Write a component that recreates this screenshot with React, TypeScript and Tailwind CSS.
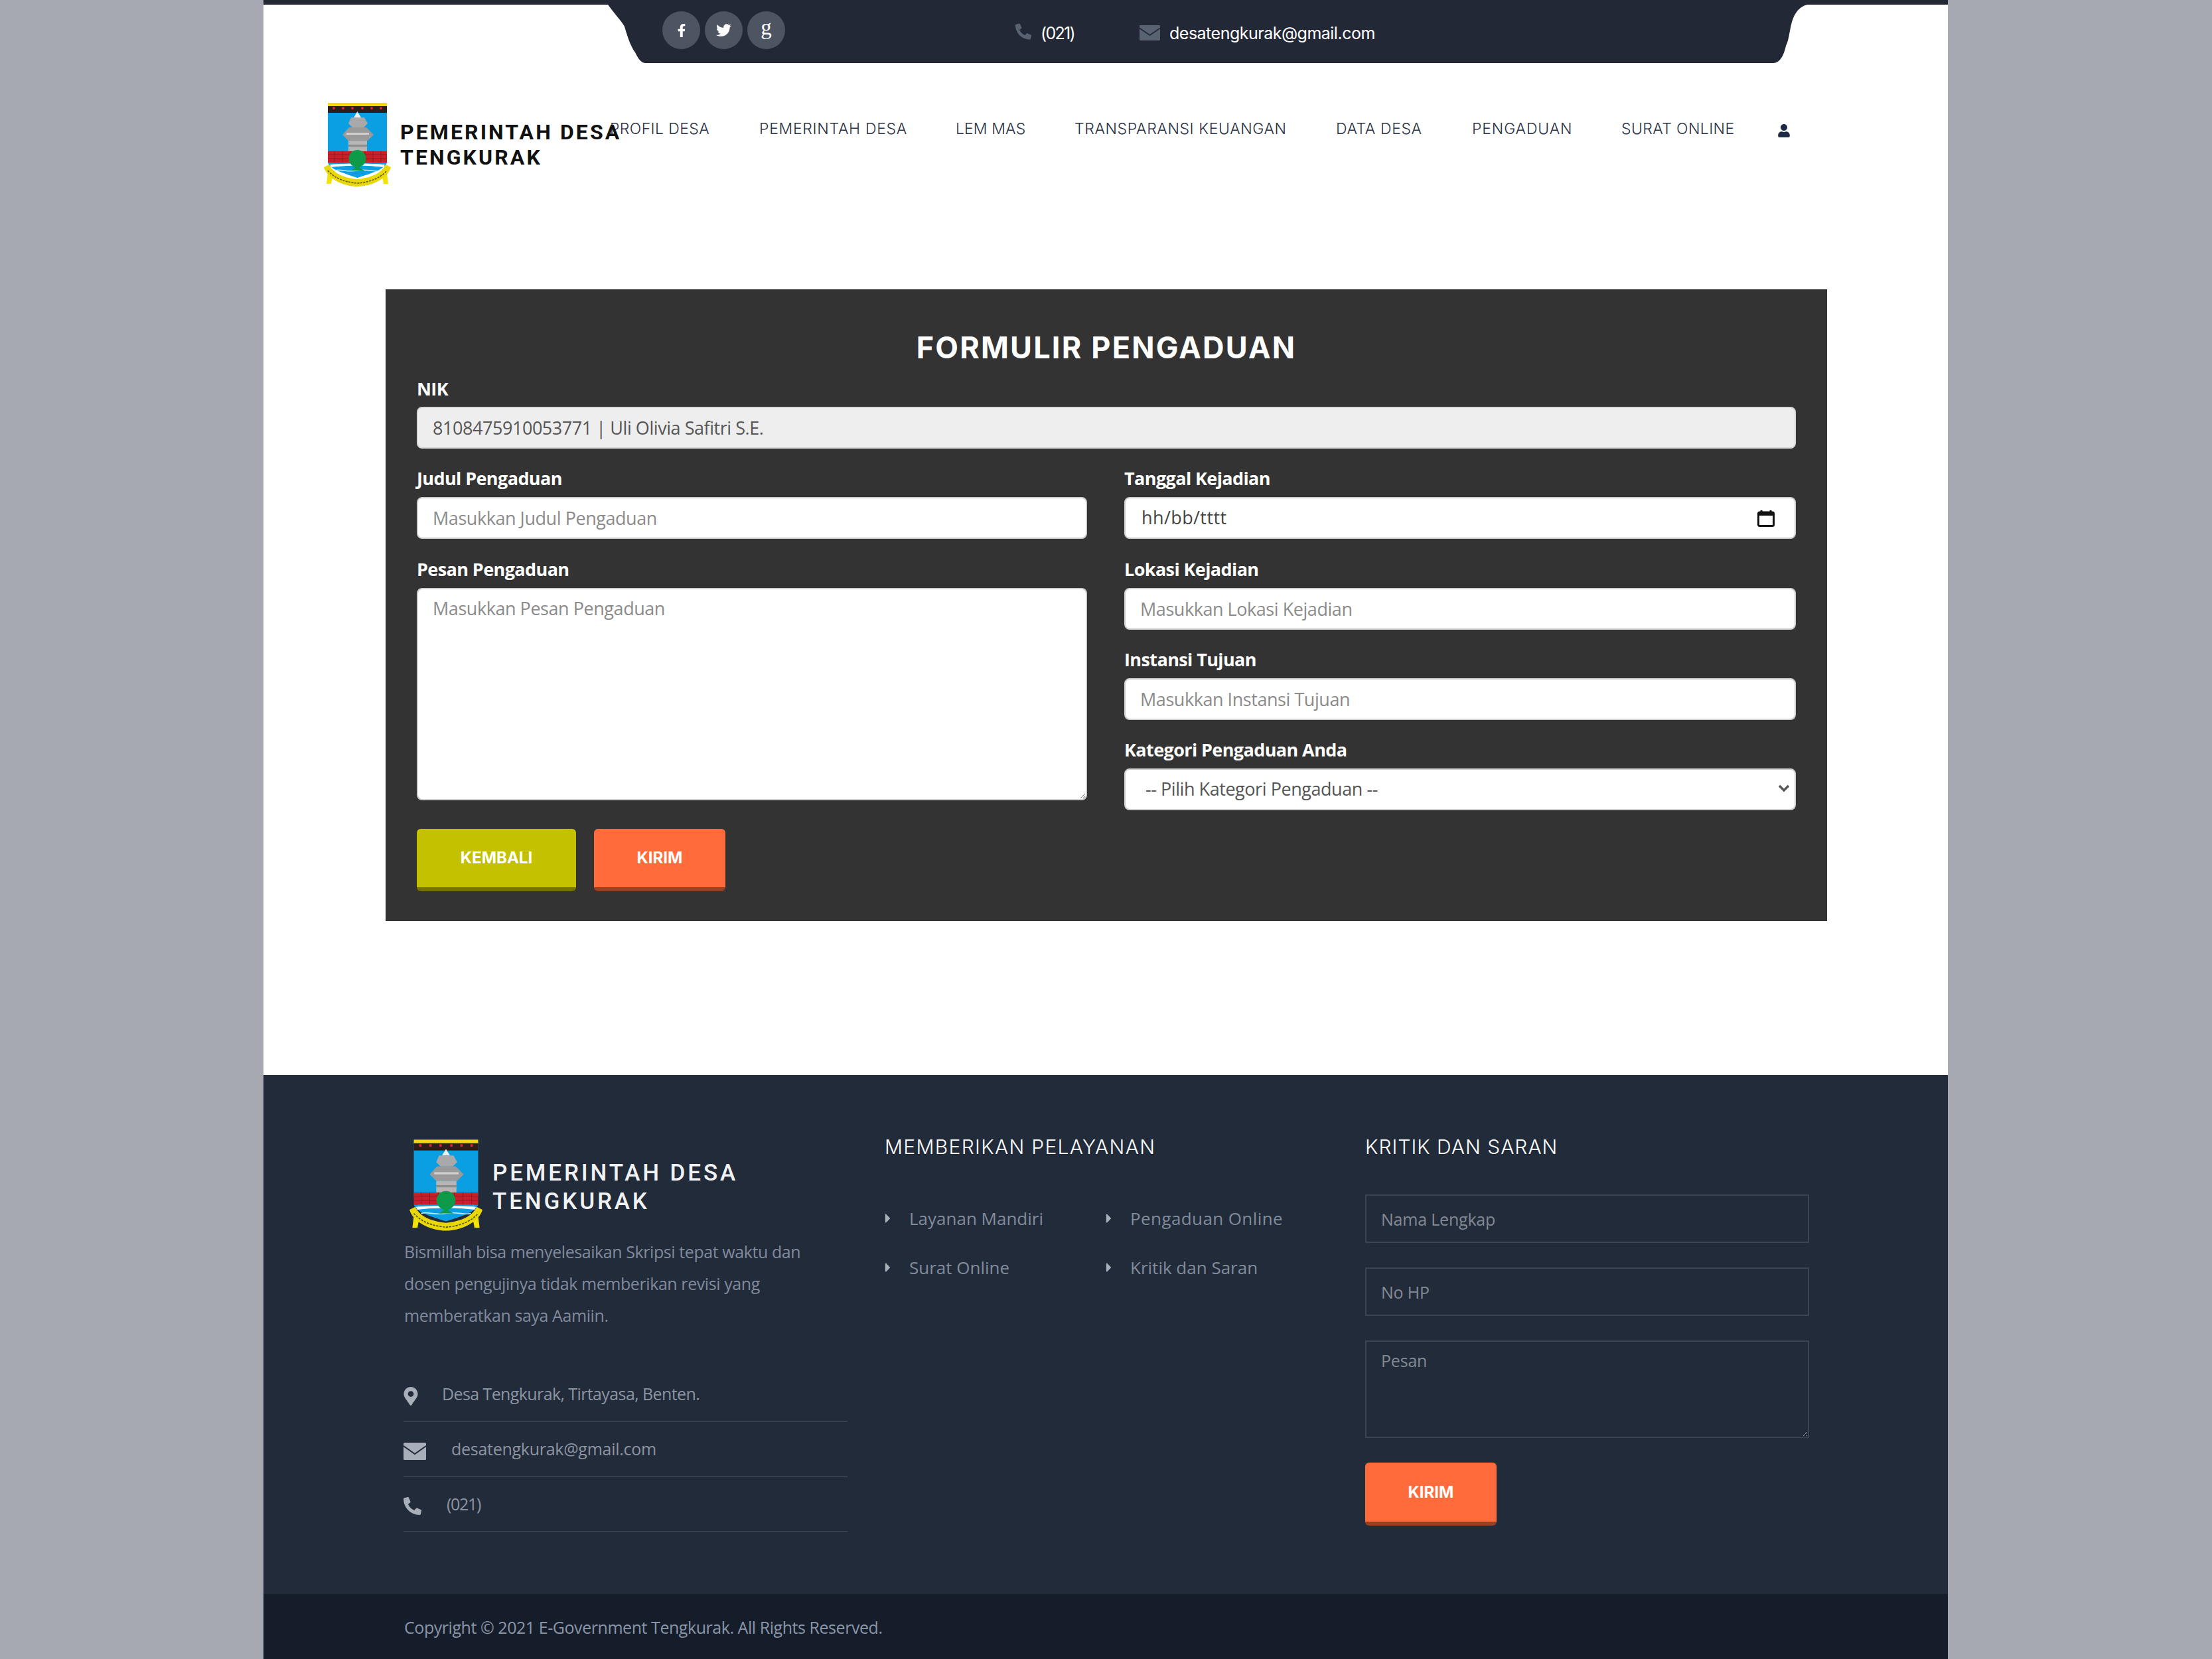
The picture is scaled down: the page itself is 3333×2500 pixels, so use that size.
import React from "react";
import { FaFacebookF, FaTwitter, FaPhoneAlt, FaUser, FaMapMarkerAlt, FaCaretRight } from "react-icons/fa";

function Crest({ className }: { className: string }) {
  return (
    <svg viewBox="0 0 101 126" className={className}>
      <path d="M6 3 H95 V76 C95 92 74 104 50.500 112 C27 104 6 92 6 76 Z" fill="#0a9fe3" />
      <rect x="6" y="0" width="89" height="5" fill="#f5d90a" />
      <rect x="6" y="5" width="89" height="10" fill="#2b1d1a" />
      <g fill="#d8232a">
        <circle cx="15" cy="8" r="2" /><circle cx="29" cy="8" r="2" /><circle cx="43" cy="8" r="2" /><circle cx="58" cy="8" r="2" /><circle cx="72" cy="8" r="2" /><circle cx="86" cy="8" r="2" />
      </g>
      <path d="M50.500 13 L56 22 H45 Z" fill="#f2f2f2" />
      <path d="M41 22 H61 L66 31 L60 37 H43 L37 31 Z" fill="#a9a9a9" />
      <path d="M38 37 H64 L75 48 L66 57 H37 L28 48 Z" fill="#9a9a9a" />
      <rect x="34" y="45" width="34" height="3" fill="#cfcfcf" />
      <rect x="37" y="57" width="28" height="17" fill="#b5b5b5" />
      <rect x="37" y="63" width="28" height="3" fill="#8d8d8d" />
      <path d="M6 73 H95 V90 H6 Z" fill="#c8202a" />
      <g stroke="#8e151c" strokeWidth="0.800">
        <path d="M6 78 H95 M6 84 H95" />
        <path d="M16 73 V90 M28 73 V90 M40 73 V90 M62 73 V90 M74 73 V90 M86 73 V90" />
      </g>
      <path d="M6 90 H95 C92 100 72 106 50.500 113 C29 106 9 100 6 90 Z" fill="#0a9fe3" />
      <path d="M9 93 C30 91 70 91 92 93 L90 97 C70 94 30 94 11 97 Z" fill="#ffffff" />
      <path d="M16 102 C26 99 34 105 50 102 C66 99 76 105 85 102" stroke="#bfe8fa" strokeWidth="1.500" fill="none" />
      <ellipse cx="50.500" cy="84" rx="13" ry="13" fill="#0f9a4a" />
      <path d="M48 90 H53 L54 98 L61 102 H40 L47 98 Z" fill="#0f9a4a" />
      <path d="M4 122 L11 122 L13 112 L6 106 Z M97 122 L90 122 L88 112 L95 106 Z" fill="#f2e205" />
      <path d="M0 97 L8 93 C14 106 30 113 50.500 115 C71 113 87 106 93 93 L101 97 C96 114 72 126 50.500 126 C29 126 5 114 0 97 Z" fill="#e8d80a" />
      <path d="M6 102 C16 114 34 120 50.500 121 C67 120 85 114 95 102" stroke="#5b5200" strokeWidth="1.500" strokeDasharray="3 1.500" fill="none" />
    </svg>
  );
}

function MailIcon({ className, fg, bg }: { className: string; fg: string; bg: string }) {
  return (
    <svg viewBox="0 0 34 26" className={className} preserveAspectRatio="none">
      <rect width="34" height="26" rx="1.500" fill={fg} />
      <path d="M0 5 L17 17 L34 5" stroke={bg} strokeWidth="2" fill="none" />
    </svg>
  );
}

function LogoText({ color, className }: { color: string; className: string }) {
  return (
    <div className={`whitespace-nowrap font-['Roboto',sans-serif] uppercase ${color} ${className}`}>
      <div>Pemerintah Desa</div>
      <div>Tengkurak</div>
    </div>
  );
}

const Label = ({ children }: { children: React.ReactNode }) => (
  <label className="block h-[28px] mb-[14px] text-[27px] leading-[28px] font-bold text-white tracking-[-0.600px]">{children}</label>
);

const inputCls =
  "block w-full h-[63px] rounded-[8px] border-2 px-[22px] text-[27px] tracking-[-0.450px] placeholder:text-[#8b8b8b] outline-none";

const Field = ({ label, placeholder, mt }: { label: string; placeholder: string; mt: string }) => (
  <div className={mt}>
    <Label>{label}</Label>
    <input className={`${inputCls} bg-white border-[#cfcfcf] text-[#555]`} placeholder={placeholder} />
  </div>
);

const Btn = ({ children, className }: { children: React.ReactNode; className: string }) => (
  <button className={`h-[94px] rounded-[6px] text-[24px] font-bold text-white font-['Inter',sans-serif] border-b-[6px] ${className}`}>{children}</button>
);

const navItems: [string, string, string][] = [
  ["PROFIL DESA", "w-[150px]", "tracking-[0.400px]"],
  ["PEMERINTAH DESA", "w-[221px]", "tracking-[0.700px]"],
  ["LEM MAS", "w-[104px]", "tracking-[0.100px]"],
  ["TRANSPARANSI KEUANGAN", "w-[319px]", "tracking-[0.600px]"],
  ["DATA DESA", "w-[130px]", "tracking-[0.600px]"],
  ["PENGADUAN", "w-[150px]", "tracking-[0.850px]"],
  ["SURAT ONLINE", "w-[171px]", "tracking-[0.400px]"],
];

const FooterLink = ({ children, className }: { children: string; className?: string }) => (
  <div className="flex h-[74px] w-[333px] items-center text-[#818b9b]">
    <FaCaretRight className="w-[10px] h-[22px] text-[#a9afb9] shrink-0" />
    <span className={`ml-[27px] ${className ?? ""}`}>{children}</span>
  </div>
);

const darkField =
  "block w-full rounded-none border-2 border-[#3a4452] bg-transparent px-[22px] text-[25px] tracking-[-0.200px] text-[#a0a6b0] placeholder:text-[#838993] outline-none";

const footerHead = "flex h-[54px] items-center pt-[2px] text-[30px] text-white font-['Inter',sans-serif] font-light";

export default function App() {
  return (
    <div className="w-[3333px] h-[2500px] overflow-hidden bg-[#a7a9b2] pl-[397px] font-['Open_Sans',sans-serif]">
      <div className="w-[2538px] h-[2500px] bg-white">
        {/* top bar */}
        <div className="h-[7px] bg-[#232836]" />
        <div className="flex h-[88px]">
          <div className="w-[519px]" />
          <svg viewBox="0 0 57 88" className="w-[57px] h-[88px]">
            <path d="M0 0 C10 14 20 24 25 33 C30 50 34 62 41 72 C46 82 50 88 57 88 L57 0 Z" fill="#232836" />
          </svg>
          <div className="flex flex-1 items-center bg-[#232836] pl-[25px] text-white">
            <div className="flex gap-[7px] self-start pt-[10px]">
              {[
                <FaFacebookF key="f" className="w-[20px] h-[20px]" />,
                <FaTwitter key="t" className="w-[23px] h-[23px]" />,
                <span key="g" className="font-['Liberation_Serif',serif] text-[33px] leading-none -mt-[8px]">g</span>,
              ].map((ic, i) => (
                <div key={i} className="flex w-[57px] h-[57px] items-center justify-center rounded-full bg-[#4d5563]">
                  {ic}
                </div>
              ))}
            </div>
            <FaPhoneAlt className="ml-[347px] w-[24px] h-[25px] text-[#596270] -mt-[8px]" />
            <span className="ml-[14px] w-[48px] text-[25px] font-['Inter',sans-serif] tracking-[-1.700px]">(021)</span>
            <MailIcon className="ml-[101px] w-[31px] h-[23px] -mt-[4px]" fg="#596270" bg="#232836" />
            <span className="ml-[14px] text-[25px] font-['Inter',sans-serif] tracking-[-0.500px]">desatengkurak@gmail.com</span>
          </div>
          <svg viewBox="0 0 52 88" className="w-[52px] h-[88px]">
            <path d="M0 0 L52 0 C40 2 32 12 28 26 C24 40 24 52 19 62 C16 76 10 88 0 88 Z" fill="#232836" />
          </svg>
          <div className="w-[211px]" />
        </div>

        {/* header */}
        <div className="flex pl-[91px] pt-[60px]">
          <div className="relative z-10 flex w-[431px] shrink-0">
            <Crest className="w-[101px] h-[126px] shrink-0" />
            <LogoText color="text-[#111]" className="ml-[14px] mt-[25px] text-[32px] leading-[38px] tracking-[3.100px] font-bold" />
          </div>
          <div className="flex mt-[24px] gap-[75px] h-[30px] items-center">
            {navItems.map(([t, w, tr]) => (
              <div key={t} className={`${w} ${tr} shrink-0 whitespace-nowrap text-[23px] font-['Inter',sans-serif] font-light text-[#2a3244]`}>{t}</div>
            ))}
            <FaUser className="-ml-[10px] w-[18px] h-[20px] text-[#1f2a44] mt-[6px]" />
          </div>
        </div>

        {/* form */}
        <div className="ml-[184px] mt-[155px] w-[2172px] bg-[#333333] px-[47px] pt-[65px] pb-[45px]">
          <h2 className="h-[44px] pt-[1px] text-center text-[45px] leading-[44px] font-bold text-white font-['Inter',sans-serif] tracking-[2.200px]">FORMULIR PENGADUAN</h2>
          <div className="mt-[27px]">
            <label className="block h-[28px] mb-[13px] text-[27px] leading-[28px] font-bold text-white tracking-[-0.600px]">NIK</label>
            <input className={`${inputCls} bg-[#eeeeee] border-[#d8d8d8] text-[#555]`} readOnly value="8108475910053771 | Uli Olivia Safitri S.E." />
          </div>
          <div className="grid grid-cols-[1010px_1012px] gap-x-[56px]">
            <div>
              <Field mt="mt-[31px]" label="Judul Pengaduan" placeholder="Masukkan Judul Pengaduan" />
              <div className="mt-[32px]">
                <Label>Pesan Pengaduan</Label>
                <textarea className="block w-full h-[320px] rounded-[8px] border-2 border-[#cfcfcf] bg-white px-[22px] py-[9px] text-[27px] tracking-[-0.450px] placeholder:text-[#8b8b8b] outline-none" placeholder="Masukkan Pesan Pengaduan" />
              </div>
            </div>
            <div>
              <div className="mt-[31px]">
                <Label>Tanggal Kejadian</Label>
                <div className={`${inputCls} bg-white border-[#cfcfcf] flex items-center justify-between pl-[24px] pr-[30px] text-[#444]`}>
                  <span className="tracking-[0.400px]">hh/bb/tttt</span>
                  <svg viewBox="0 0 26 26" className="w-[26px] h-[26px]">
                    <path d="M6 1 V5 M20 1 V5" stroke="#111" strokeWidth="3" />
                    <rect x="1.500" y="4" width="23" height="20.500" rx="2" fill="none" stroke="#111" strokeWidth="3" />
                    <rect x="1.500" y="4" width="23" height="5" fill="#111" />
                  </svg>
                </div>
              </div>
              <Field mt="mt-[32px]" label="Lokasi Kejadian" placeholder="Masukkan Lokasi Kejadian" />
              <Field mt="mt-[31px]" label="Instansi Tujuan" placeholder="Masukkan Instansi Tujuan" />
              <div className="mt-[31px]">
                <Label>Kategori Pengaduan Anda</Label>
                <div className="relative">
                  <select className={`${inputCls} bg-white border-[#cfcfcf] text-[#555] appearance-none pl-[30px]`}>
                    <option>-- Pilih Kategori Pengaduan --</option>
                  </select>
                  <svg viewBox="0 0 18 12" className="absolute right-[9px] top-[24px] w-[18px] h-[12px]">
                    <path d="M2 2 L9 9 L16 2" stroke="#555" strokeWidth="3.500" fill="none" />
                  </svg>
                </div>
              </div>
            </div>
          </div>
          <div className="mt-[28px] flex gap-[27px]">
            <Btn className="w-[240px] bg-[#c4c100] border-[#757300]">KEMBALI</Btn>
            <Btn className="w-[198px] bg-[#ff6b3a] border-[#994021]">KIRIM</Btn>
          </div>
        </div>

        {/* footer */}
        <div className="mt-[232px] h-[782px] bg-[#222b3a] pl-[211px] pt-[80px]">
          <div className="grid grid-cols-[669px_668px_669px] gap-x-[56px]">
            <div className="pt-[16px]">
              <div className="flex h-[140px] pl-[9px]">
                <Crest className="w-[110px] h-[140px] shrink-0" />
                <LogoText color="text-[#f0f2f4]" className="ml-[15px] mt-[30px] text-[35px] leading-[43px] tracking-[3.850px] font-medium" />
              </div>
              <p className="mt-[6px] pl-[1px] text-[25px] leading-[48px] tracking-[-0.420px] text-[#808a9c]">
                Bismillah bisa menyelesaikan Skripsi tepat waktu dan
                <br />
                dosen pengujinya tidak memberikan revisi yang
                <br />
                memberatkan saya Aamiin.
              </p>
              <div className="mt-[54px] text-[25px] text-[#8c94a2]">
                <div className="flex h-[83px] items-center border-b-2 border-[#37404e]">
                  <FaMapMarkerAlt className="w-[22px] h-[28px] text-[#a9afb9] mt-[6px]" />
                  <span className="ml-[36px] tracking-[-0.600px]">Desa Tengkurak, Tirtayasa, Benten.</span>
                </div>
                <div className="flex h-[83px] items-center border-b-2 border-[#37404e]">
                  <MailIcon className="w-[34px] h-[26px] mt-[6px]" fg="#a9afb9" bg="#222b3a" />
                  <span className="ml-[38px] tracking-[-0.270px]">desatengkurak@gmail.com</span>
                </div>
                <div className="flex h-[83px] items-center border-b-2 border-[#37404e]">
                  <FaPhoneAlt className="w-[27px] h-[27px] text-[#a9afb9] mt-[6px]" />
                  <span className="ml-[38px] tracking-[-1.300px]">(021)</span>
                </div>
              </div>
            </div>
            <div>
              <h3 className={`${footerHead} tracking-[1.300px]`}>MEMBERIKAN PELAYANAN</h3>
              <div className="mt-[45px] grid grid-cols-[333px_333px] text-[26px]">
                <FooterLink>Layanan Mandiri</FooterLink>
                <FooterLink className="tracking-[0.400px]">Pengaduan Online</FooterLink>
                <FooterLink>Surat Online</FooterLink>
                <FooterLink>Kritik dan Saran</FooterLink>
              </div>
            </div>
            <div>
              <h3 className={`${footerHead} tracking-[1px]`}>KRITIK DAN SARAN</h3>
              <input className={`${darkField} mt-[46px] h-[73px]`} placeholder="Nama Lengkap" />
              <input className={`${darkField} mt-[37px] h-[73px]`} placeholder="No HP" />
              <textarea className={`${darkField} mt-[37px] h-[147px] py-[10px]`} placeholder="Pesan" />
              <button className="mt-[37px] w-[198px] h-[95px] rounded-[6px] bg-[#ff6b3a] border-b-[6px] border-[#994021] text-[24px] font-bold text-white font-['Inter',sans-serif]">KIRIM</button>
            </div>
          </div>
        </div>
        <div className="flex h-[98px] items-center bg-[#161d2a] pl-[212px] pt-[4px] text-[25px] tracking-[-0.450px] text-[#8a95a8]">
          Copyright © 2021 E-Government Tengkurak. All Rights Reserved.
        </div>
      </div>
    </div>
  );
}
